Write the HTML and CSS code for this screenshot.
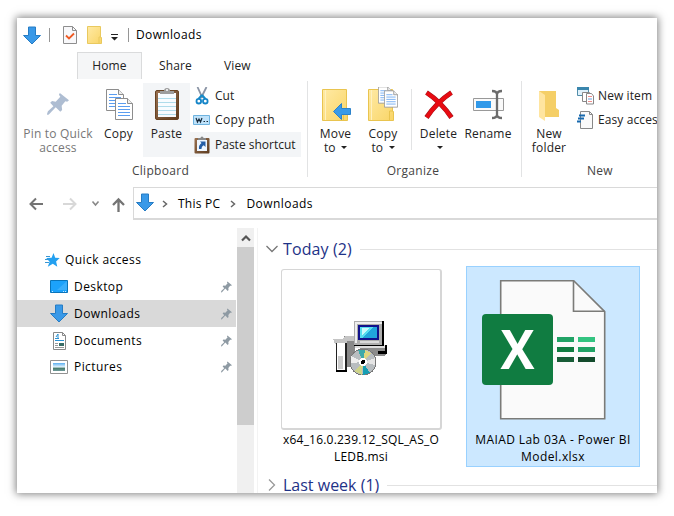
FILE: index.html
```html
<!DOCTYPE html>
<html lang="en">
<head>
<meta charset="utf-8">
<title>Downloads</title>
<link rel="stylesheet" href="styles.css">
</head>
<body>
<svg class="defs" aria-hidden="true">
  <defs>
    <linearGradient id="gf" x2="1" y2="1"><stop offset="0" stop-color="#ffeaa5"/><stop offset="1" stop-color="#f9d567"/></linearGradient>
    <linearGradient id="gb" x2="1" y2="1"><stop offset="0" stop-color="#9a7251"/><stop offset="1" stop-color="#5d3c20"/></linearGradient>
    <linearGradient id="gsky" x2="0" y2="1"><stop offset="0" stop-color="#5aaef0"/><stop offset=".5" stop-color="#e6f4fb"/><stop offset=".65" stop-color="#477b6b"/><stop offset="1" stop-color="#6f9a9a"/></linearGradient>
  </defs>
  <symbol id="down" viewBox="0 0 18 19"><path d="M5.5 1h7v8.500h5L9 18 .5 9.500h5z" fill="#3999e8" stroke="#267cc4"/></symbol>
  <symbol id="pin" viewBox="0 0 24 24"><path d="M14 0l10 8-2 1.500-2-.5-4 5 .5 4.500-2 2-5-5L2 23.500.5 24 0 23l1-3 6-5.500-3.500-4 2-1.700 4 .7L14.500 4 13 2z"/></symbol>
  <symbol id="page" viewBox="0 0 18 22"><path d="M.5.5h12l5 5v16H.5z" fill="#fff" stroke="#8d8d8d"/><path d="M12.500.5v5h5" fill="#eee" stroke="#8d8d8d"/><path d="M3 5.500h8M3 8.500h12M3 11.500h12M3 14.500h12M3 17.500h12" stroke="#5a9df0"/></symbol>
  <symbol id="folder" viewBox="0 0 26 32"><path d="M.5.5h24v22h1v9H.5z" fill="url(#gf)" stroke="#e9c44f"/><path d="M3.500 1v30" stroke="#fff1c0"/><path d="M21.500 31v-9h3" fill="none" stroke="#e9c44f"/></symbol>
</svg>
<main class="window">
  <header class="titlebar">
    <svg class="t-down" width="18" height="19"><use href="#down"/></svg><i class="bar"></i>
    <svg class="t-check" width="14" height="18" viewBox="0 0 14 18"><path d="M.5.5h9l4 4v13H.5z" fill="#f8f8fa" stroke="#8e8e8e"/><path d="M9.500.5v4h4" fill="none" stroke="#8e8e8e"/><path d="M3 9.500l3 3 5-5" fill="none" stroke="#ee5a24" stroke-width="1.800"/></svg>
    <svg class="t-folder" width="15" height="18" viewBox="0 0 15 18"><path d="M.5.5h13v11h1v6H.5z" fill="url(#gf)" stroke="#e9c95e"/><path d="M12 17v-6h1.500" fill="none" stroke="#e9c95e"/></svg>
    <svg class="t-menu" width="7" height="7" viewBox="0 0 7 7"><path d="M0 0h7v1H0zM0 3h7L3.500 6.500z" fill="#222"/></svg>
    <i class="bar bar2"></i><span class="title">Downloads</span>
  </header>
  <nav class="tabs"><span class="tab on">Home</span><span class="tab share">Share</span><span class="tab view">View</span></nav>

  <section class="ribbon">
    <div class="group clipboard">
      <div class="tools">
        <div class="big w-pin dim"><svg class="ic" width="24" height="36" viewBox="0 0 24 36"><use href="#pin" x="1" y="5" width="22" height="24" fill="#aebdd2"/></svg><span class="pinlabel">Pin to Quick<br>access</span></div>
        <div class="big w-copy"><svg class="ic" width="28" height="36" viewBox="0 0 28 36"><use href="#page" x="1" y="2" width="18" height="22"/><use href="#page" x="10" y="11" width="18" height="22"/></svg><span>Copy</span></div>
        <div class="big w-paste lit"><svg class="ic" width="24" height="36" viewBox="0 0 24 36"><rect x=".5" y="3.500" width="23" height="29" rx="1.500" fill="url(#gb)" stroke="#674323"/><path d="M3 6h18v24H3z" fill="#f8fcff"/><path d="M3 11.500h18M3 15.500h18M3 19.500h18M3 23.500h18M3 27.500h18" stroke="#afdceb"/><path d="M5 7V4h4a3 3 0 0 1 6 0h4v3z" fill="#9d9d9d"/><circle cx="12" cy="3" r="1" fill="#fff"/></svg><span>Paste</span></div>
        <div class="smalls">
          <div class="small"><svg width="18" height="18" viewBox="0 0 18 18"><path d="M4.500 0l5 11M13.500 0L8 11" stroke="#8a94a5" stroke-width="1.800"/><path d="M9 8l3.500 4M9 8l-3.500 4" stroke="#158bc9" stroke-width="2"/><ellipse cx="5.800" cy="14.200" rx="2.300" ry="2.300" fill="none" stroke="#1585c8" stroke-width="1.800"/><ellipse cx="12.300" cy="14.200" rx="2.300" ry="2.300" fill="none" stroke="#1585c8" stroke-width="1.800"/></svg><span>Cut</span></div>
          <div class="small"><svg width="18" height="12" viewBox="0 0 18 12"><path d="M.5 1.500h16v9H.5z" fill="#bfe2fa" stroke="#6eb3df"/><path d="M3 4l1.500 4L6 5l1.500 3L9 4M10.500 7.500h1.500M13.500 7.500H15" fill="none" stroke="#182a3a" stroke-width="1.200"/></svg><span class="cp">Copy path</span></div>
          <div class="small lit"><svg width="18" height="18" viewBox="0 0 18 18"><rect x="1.500" y="2" width="15" height="15.500" rx="1" fill="url(#gb)"/><path d="M4 4h10v11H4z" fill="#eef6ff"/><path d="M5 3V2h2.500a1.500 1.500 0 0 1 3 0H13v2H5z" fill="#888"/><path d="M7 5.500h5.500V11l-1.800-1.800C9 10 8.500 11.500 8.500 13H6c-.4-3 .6-4.500 2.500-6z" fill="#245da5"/></svg><span class="ps">Paste shortcut</span></div>
        </div>
      </div>
      <h2>Clipboard</h2>
    </div>
    <div class="group organize">
      <div class="tools">
        <div class="big w-move"><svg class="ic" width="30" height="36" viewBox="0 0 30 36"><use href="#folder" x="1" y="2" width="26" height="32"/><path d="M12.500 24.500l8-8v5h9v6h-9v5z" fill="#399ae8" stroke="#2c83cb"/></svg><span>Move<br>to <b class="dd"></b></span></div>
        <div class="big w-copyto"><svg class="ic" width="30" height="36" viewBox="0 0 30 36"><use href="#folder" x="0" y="2" width="26" height="32"/><use href="#page" x="10" y="-1" width="14" height="18"/><use href="#page" x="16" y="3" width="14" height="18"/></svg><span>Copy<br>to <b class="dd"></b></span></div>
        <i class="sep"></i>
        <div class="big w-del"><svg class="ic" width="30" height="36" viewBox="0 0 30 36"><path d="M2.500 5.500Q17 15 27.500 30.500M27.500 5.500Q13 15 2.500 30.500" fill="none" stroke="#a5161c" stroke-width="5"/><path d="M2.800 5.800Q17 15 27.200 30.200M27.200 5.800Q13 15 2.800 30.200" fill="none" stroke="#e80b12" stroke-width="3.800"/></svg><span>Delete<br><b class="dd"></b></span></div>
        <div class="big w-ren"><svg class="ic" width="32" height="36" viewBox="0 0 32 36"><path d="M1.500 11.500h30v12h-30z" fill="#fafafa" stroke="#999"/><path d="M4 14h15v7H4z" fill="#3199e9"/><path d="M20 4q4.500 0 5 3 .5-3 5-3M25 6v24M20 31q4.500 0 5-3 .5 3 5 3" fill="none" stroke="#6c6c6c" stroke-width="2.300"/></svg><span>Rename</span></div>
      </div>
      <h2>Organize</h2>
    </div>
    <div class="group new">
      <div class="tools">
        <div class="big w-new"><svg class="ic" width="22" height="36" viewBox="0 0 22 36"><path d="M1 4h17v17l3 2v7H5z" fill="#f5cf67"/><path d="M1 4l6 4v26l-6-4z" fill="#ffe5a0"/></svg><span>New<br>folder</span></div>
        <div class="smalls">
          <div class="small"><svg width="18" height="18" viewBox="0 0 18 18"><path d="M.5.500h11v8H.5z" fill="#dff1fb" stroke="#528eaa"/><path d="M0 1.500h12" stroke="#3a86ad" stroke-width="3"/><path d="M5.500 5.500h7v9h-7z" fill="#fff" stroke="#888"/><path d="M9.500 6.500h5l2 2.500v8h-7z" fill="#fff" stroke="#888"/><path d="M11 9.500h4M11 14.500h4" stroke="#ef8d8d"/><path d="M11 12h4" stroke="#69a0dd"/></svg><span>New item <b class="dd"></b></span></div>
          <div class="small"><svg width="18" height="18" viewBox="0 0 18 18"><path d="M3.500.5h9l3 3v14h-12z" fill="#fafafa" stroke="#888"/><path d="M12.500.5v3h3" fill="none" stroke="#888"/><path d="M2 4.500h6M1 7.500h6M0 10.500h4" stroke="#1769ae" stroke-width="2"/></svg><span>Easy access <b class="dd"></b></span></div>
        </div>
      </div>
      <h2>New</h2>
    </div>
  </section>

  <section class="address">
    <div class="arrows">
      <svg width="116" height="31" viewBox="0 0 116 31" fill="none" stroke-width="2"><path d="M26 17H13.500M19 11.500L13.500 17l5.500 5.500" stroke="#747474"/><path d="M46 17h12.500M53 11.500l5.500 5.500-5.500 5.500" stroke="#d8d8d8"/><path d="M75.500 14.500l3 3.500 3-3.500" stroke="#888" stroke-width="1.600"/><path d="M101.500 25V12.500M96 18l5.500-5.500L107 18" stroke="#747474" stroke-width="2.300"/></svg>
    </div>
    <div class="path"><svg class="p-down" width="18" height="19"><use href="#down"/></svg><svg class="chev" width="6" height="8" viewBox="0 0 6 8"><path d="M1 1l3.500 3L1 7" /></svg><span>This PC</span><svg class="chev c2" width="6" height="8" viewBox="0 0 6 8"><path d="M1 1l3.500 3L1 7"/></svg><span class="dl">Downloads</span></div>
  </section>

  <section class="content">
    <aside class="side">
      <div class="row head"><svg width="16" height="14" viewBox="0 0 16 14"><path d="M8.500 0l1.700 4.700 4.500.2-3.600 3.600 1.200 5.200-4.500-2.900-5 2.900 1.800-5L1.200 5l5.400-.3z" fill="#23a0f0"/><path d="M1 3.500h4M0 6.500h4M0 9.500h4" stroke="#3a96d2"/></svg><span>Quick access</span></div>
      <div class="row"><svg class="ri" width="18" height="18" viewBox="0 0 18 18"><path d="M.5 2.500h17v12H.5z" fill="#1ca2fb" stroke="#0974ba"/><path d="M17 3v9H7z" fill="#3aaffc"/><path d="M2 13.500h14" stroke="#c6eaff" stroke-dasharray="1 10 1 1"/></svg><span>Desktop</span><svg class="rp" width="11" height="12"><use href="#pin"/></svg></div>
      <div class="row sel"><svg class="ri" width="18" height="19"><use href="#down"/></svg><span>Downloads</span><svg class="rp" width="11" height="12"><use href="#pin"/></svg></div>
      <div class="row"><svg class="ri" width="18" height="18" viewBox="0 0 18 18"><path d="M3.500.5h9l3 3v14h-12z" fill="#fff" stroke="#888"/><path d="M12.500.5v3h3" fill="none" stroke="#888"/><path d="M5 6.500h4M5 8.500h9" stroke="#2b92d3"/><path d="M5 11.500h3M5 13.500h3M5 15.500h9" stroke="#999"/><path d="M9 11h5v3H9z" fill="#386d66"/><path d="M6 5l2-3v4" stroke="#2b92d3" fill="none"/></svg><span>Documents</span><svg class="rp" width="11" height="12"><use href="#pin"/></svg></div>
      <div class="row pics"><svg class="ri" width="18" height="18" viewBox="0 0 18 18"><path d="M.5 2.500h17v13H.5z" fill="#fff" stroke="#929292"/><path d="M3 5h12v8H3z" fill="url(#gsky)"/></svg><span>Pictures</span><svg class="rp" width="11" height="12"><use href="#pin"/></svg></div>
    </aside>
    <div class="scroll"><div class="up"><svg width="10" height="8" viewBox="0 0 10 8"><path d="M1 6.500l4-4 4 4" fill="none" stroke="#555" stroke-width="2.200"/></svg></div><div class="thumb"></div></div>
    <div class="files">
      <h3><svg width="12" height="8" viewBox="0 0 12 8"><path d="M.5 1L6 6.500 11.500 1"/></svg><span class="today">Today (2)</span><i></i></h3>
      <div class="grid">
        <div class="file msi">
          <div class="thumbbox">
            <svg width="56" height="56" viewBox="0 0 56 56" shape-rendering="crispEdges">
              <path d="M11 15h11v31H11zM1 18h10v4H1z" fill="#888"/><path d="M0 18h10l2-3h9v5h-7v3H2z" fill="#c5c5c5"/><path d="M4 22h8v28H4z" fill="#fff"/><path d="M3 22h1v27H3zM12 22h2v28h-2z" fill="#222"/><path d="M5 35h5v13H5z" fill="#ccc"/><path d="M3 49h11v2H3z"/>
              <path d="M22 24h32v9l-3 2H37z" fill="#8b8b8b"/><path d="M22 24h30v3H22z" fill="#ddd"/><path d="M52 24h2v9h-9v-3h7z"/><path d="M21 0h30v25H21z"/><path d="M21 0h28v24H21z" fill="#adadad"/><path d="M22 1h27v2H24v19h-2z" fill="#eee"/><path d="M25 4h21v15H25z" fill="#11118b"/><path d="M27 6h17v11H27z" fill="#20a5dc"/><path d="M27 6h14L29 17h-2z" fill="#57deef"/><path d="M29 7h8l-8 7z" fill="#c9fafd"/><path d="M27 20h19v2H27z" fill="#dadada"/>
              <circle cx="30" cy="41" r="13" fill="#b8bdc0" stroke="#777"/><path d="M30 41l-5-12h7z" fill="#3fa9aa"/><path d="M30 41l2-12 6 3z" fill="#e0d681"/><path d="M30 41l-9 9 8 4z" fill="#ced489"/><path d="M30 41l0 13 7-2z" fill="#169eb3"/><path d="M30 41l-12-6v7z" fill="#eee"/><path d="M30 41l12-4v7z" fill="#e5e5e5"/><circle cx="30" cy="41" r="4" fill="#fff"/><circle cx="30" cy="41" r="2"/>
            </svg>
          </div>
          <p>x64_16.0.239.12_SQL_AS_O<br>LEDB.msi</p>
        </div>
        <div class="file xlsx">
          <svg width="126" height="144" viewBox="0 0 126 144"><path d="M18.700 2.700h73l31 31v107h-104z" fill="#fafafa" stroke="#7b7b78" stroke-width="1.600"/><path d="M91.500 2.700v30.500h31" fill="none" stroke="#7b7b78" stroke-width="1.600"/><rect x="0" y="36" width="71" height="71" rx="4" fill="#107c41"/><text x="18.500" y="91" textLength="34" lengthAdjust="spacingAndGlyphs">X</text><path d="M75 59h17v5H75zM96 69h17v5H96z" fill="#21a366"/><path d="M96 59h17v5H96z" fill="#33c481"/><path d="M75 69h17v5H75z" fill="#107c41"/><path d="M75 79h17v5H75z" fill="#185c37"/><path d="M96 79h17v5H96z" fill="#134a2c"/></svg>
          <p>MAIAD Lab 03A - Power BI<br>Model.xlsx</p>
        </div>
      </div>
      <h3 class="last"><svg width="8" height="12" viewBox="0 0 8 12"><path d="M1 .5L6.500 6 1 11.500"/></svg><span>Last week (1)</span><i></i></h3>
    </div>
  </section>
</main>
</body>
</html>
```

FILE: styles.css
```css
* { box-sizing: border-box; }
body { margin: 0; width: 674px; height: 516px; overflow: hidden; background: #fff; padding: 18px 17px; font: 12px/16px "Open Sans", "Noto Sans", sans-serif; color: #000; }
h2, h3, p { margin: 0; font-weight: 400; }
svg { display: block; flex: none; }
span { white-space: nowrap; }
.defs { position: absolute; width: 0; height: 0; }
.window { width: 640px; height: 475px; overflow: hidden; background: #fff; box-shadow: 0 0 8px 1px rgba(0,0,0,.5); display: flex; flex-direction: column; }
.titlebar { height: 34px; flex: none; display: flex; align-items: center; padding-left: 6px; }
.bar { width: 1px; height: 14px; background: #969696; margin-left: 8px; }
.t-check { margin-left: 13px; }
.t-folder { margin-left: 10px; }
.t-menu { margin: 4px 0 0 9px; }
.bar2 { margin-left: 10px; }
.title { margin-left: 7px; letter-spacing: .35px; }
.tabs { height: 27px; flex: none; display: flex; }
.tab { line-height: 28px; color: #222; letter-spacing: .1px; }
.on { margin-left: 60px; width: 65px; text-align: center; background: #f5f6f7; border: 1px solid #dadbdc; border-bottom: 0; line-height: 26px; }
.share { margin-left: 17px; width: 65px; }
.ribbon { height: 108px; flex: none; display: flex; color: #222; padding-top: 2px; }
.group { flex: none; height: 96px; padding-top: 2px; }
.group + .group { border-left: 1px solid #e2e3e4; }
.clipboard { width: 290px; padding-left: 5px; }
.organize { width: 214px; padding-left: 2px; }
.new { width: 159px; }
.tools { display: flex; height: 74px; }
.group h2 { font-size: 12px; line-height: 16px; margin-top: 6px; text-align: center; color: #444; letter-spacing: .3px; }
.clipboard h2 { margin-right: 8px; }
.organize h2 { margin-right: 5px; }
.new h2 { margin-right: 2px; }
.big { display: flex; flex-direction: column; align-items: center; text-align: center; line-height: 14px; padding-top: 4px; flex: none; }
.big .ic { margin-bottom: 4px; }
.big span { letter-spacing: .2px; }
.dim { color: #777; }
.w-pin { width: 72px; }
.w-copy { width: 49px; }
.w-paste { width: 47px; }
.lit { background: #f3f5f7; }
.w-move { width: 51px; }
.w-copyto { width: 44px; }
.sep { width: 1px; height: 61px; margin: 6px 2px 0 6px; background: #e2e3e4; }
.w-del { width: 49px; }
.w-ren { width: 50px; }
.w-new { width: 54px; }
.smalls { display: grid; grid-template-rows: 25px 24px 25px; }
.small { display: flex; align-items: center; padding-left: 3px; gap: 4px; width: 111px; }
.cp { letter-spacing: .35px; }
.new .small { padding-left: 1px; gap: 3px; letter-spacing: .1px; }
.dd { display: inline-block; border: 3px solid transparent; border-top-color: #222; border-bottom: 0; vertical-align: 3px; margin-left: 2px; }
.address { height: 33px; flex: none; display: flex; }
.arrows { width: 116px; }
.path { flex: 1; border: 1px solid #d9d9d9; border-right: 0; border-bottom-width: 2px; display: flex; align-items: center; padding: 1px 0 0 2px; letter-spacing: .25px; }
.dl { letter-spacing: .45px; }
.p-down { margin-top: -2px; }
.chev { margin: 0 10px 0 8px; fill: none; stroke: #666; stroke-width: 1.5; }
.c2 { margin: 0 10px; }
.content { height: 273px; display: flex; }
.side { width: 220px; padding-top: 26px; flex: none; letter-spacing: .42px; }
.row { height: 27px; width: 219px; display: flex; align-items: center; padding: 0 4px 0 33px; }
.head { padding-left: 28px; gap: 4px; }
.ri { margin-right: 6px; }
.rp { margin-left: auto; fill: #8e9aa3; }
.sel { background: #d9d9d9; }
.pics { height: 25px; }
.scroll { width: 17px; margin-top: 8px; background: #f0f0f0; flex: none; }
.up { height: 19px; display: flex; align-items: center; justify-content: center; }
.thumb { height: 178px; background: #cdcdcd; }
.files { flex: 1; min-width: 0; margin: 8px 0 0 3px; border-left: 1px solid #f3f3f3; }
h3 { height: 22px; margin-top: 10px; display: flex; align-items: center; padding-left: 8px; font-size: 16px; color: #1e3287; }
h3 svg { fill: none; stroke: #777; stroke-width: 1.3; margin-right: 5px; }
h3 i { height: 1px; flex: 1; background: #e2e2e2; margin-left: 8px; }
.today { letter-spacing: .1px; }
.grid { display: flex; padding: 6px 0 0 15px; gap: 17px; }
.file { width: 174px; height: 201px; text-align: center; line-height: 17px; }
.msi { display: flex; flex-direction: column; align-items: center; width: 176px; letter-spacing: .2px; }
.msi p { margin-top: 1px; }
.thumbbox { margin-top: 3px; width: 161px; height: 161px; border: 1px solid #d6d6d6; border-bottom-width: 2px; border-right-width: 2px; border-radius: 3px; display: flex; align-items: center; justify-content: center; flex: none; }
.xlsx { border: 1px solid #99d1ff; background: #cce8ff; display: flex; flex-direction: column; align-items: center; letter-spacing: .42px; }
.xlsx svg { margin: 11px 16px 0 0; }
.xlsx p { margin-top: 9px; }
.xlsx text { font: 700 54px "Open Sans", sans-serif; fill: #fff; letter-spacing: 0; }
.last { margin-top: 7px; }
.last svg { margin: 0 7px 0 2px; stroke: #999; }
```
